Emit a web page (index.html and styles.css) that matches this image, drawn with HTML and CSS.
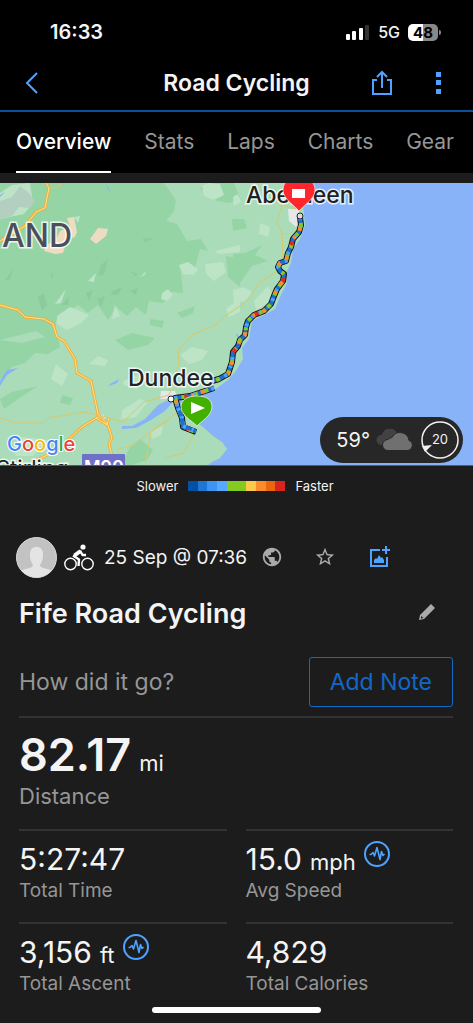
FILE: index.html
```html
<!DOCTYPE html>
<html lang="en">
    <head>
        <meta charset="utf-8">
        <meta name="viewport" content="width=device-width, initial-scale=1">
        <title>Road Cycling</title>
        <link rel="stylesheet" href="styles.css">
    </head>
    <body>
        <div class="top">
            <div class="status-bar">
                <span class="time">16:33</span>
                <div class="status-icons">
                    <svg class="signal" width="24" height="16" viewBox="0 0 24 16" fill="#fff">
                        <rect x="0" y="10" width="4" height="6" rx="1"/>
                        <rect x="6" y="7" width="4" height="9" rx="1"/>
                        <rect x="13" y="4" width="4" height="12" rx="1"/>
                        <rect x="19" y="1" width="4" height="15" rx="1" fill="#333"/>
                    </svg>
                    <span class="network">5G</span>
                    <span class="battery">48</span>
                </div>
            </div>
            <header class="header">
                <button class="icon-button back" aria-label="Back">
                    <svg width="14" height="22" viewBox="0 0 14 22" fill="none" stroke="#4da3ff" stroke-width="2"><path d="M12 1 2 11l10 10"/></svg>
                </button>
                <h1>Road Cycling</h1>
                <div class="header-actions">
                    <button class="icon-button" aria-label="Share">
                        <svg width="22" height="26" viewBox="0 0 22 26" fill="none" stroke="#4da3ff" stroke-width="2"><path d="M6 10H2v14h18V10h-4M11 18V2M6 7l5-5 5 5"/></svg>
                    </button>
                    <button class="icon-button" aria-label="More">
                        <svg width="6" height="24" viewBox="0 0 6 24" fill="#4da3ff"><path d="M0 1h5v5H0zM0 9h5v5H0zM0 18h5v5H0z"/></svg>
                    </button>
                </div>
            </header>
            <nav class="tabs">
                <a href="#overview" class="active">Overview</a>
                <a href="#stats">Stats</a>
                <a href="#laps">Laps</a>
                <a href="#charts">Charts</a>
                <a href="#gear">Gear</a>
            </nav>
        </div>

        <main id="overview">
            <div class="map">
                <svg class="map-image" viewBox="0 0 473 282" preserveAspectRatio="xMidYMid slice">
                    <defs>
                        <path id="ride" d="M300 34 301 42 299 49 293 56 291 64 288 70 286 78 280 80 278 84 280 88 284 91 283 98 277 106 274 113 271 121 264 128 254 132 248 138 246 144 245 152 240 157 238 163 233 169 232 179 228 191 219 196 212 198M214 205 205 208 190 213 175 215 178 225 182 235 183 244 196 249"/>
                    </defs>
                    <!--sea-->
                    <rect width="473" height="282" fill="#89b3f8"/>
                    <!--land-->
                    <path fill="#abdcb9" d="M0 0H307L303 22 305 42 300 56 293 66 291 80 286 90 287 100 281 112 275 126 264 132 252 138 249 156 242 165 243 176 236 188 228 197 214 207 192 212 176 217 180 227 190 236 202 243 213 253 222 259 227 266 220 275 212 279 208 282H0Z"/>
                    <!--firth-->
                    <path fill="#89b3f8" d="M122 243 132 243 145 236 158 222 170 216 190 212 205 222 200 236 188 233 181 222 173 219 165 228 151 237 136 245 122 246Z"/>
                    <!--highlands-->
                    <path fill="#95d4a5" d="M0 0H164L176 17 174 28 166 38 177 41 187 58 201 56 208 68 200 66 195 84 180 82 183 110 171 109 170 115 162 120 149 118 146 132 136 124 127 133 116 124 108 137 98 122 88 130 78 122 56 137 55 160 36 148 0 157Z"/>
                    <path fill="#95d4a5" d="M200 5 213 0 234 0 240 14 230 20 216 18ZM233 71 245 70 262 62 255 72 268 78 252 83 240 100 233 98ZM226 73 240 76 240 104 228 94ZM150 136 164 138 162 145 150 142ZM177 130 195 123 193 130 182 135ZM232 36 244 36 247 45 233 48Z"/>
                    <path fill="#95d4a5" d="M0 157 22 160 57 151 60 164 48 171 35 170 25 180 12 184 0 197ZM115 157 132 150 155 155 148 162 128 167ZM130 264 140 256 153 267 147 277 132 282 112 282 125 274ZM0 216 12 209 38 203 18 216 4 226ZM62 212 73 215 70 222 60 220Z"/>
                    <!--pale patches-->
                    <path fill="#bde4c7" d="M0 10 12 2 30 0 33 20 24 31 0 36ZM202 3 208 0 220 1 224 12 214 17 204 13ZM179 82 188 79 198 86 194 92 183 91ZM205 81 223 79 226 89 214 98 206 91ZM162 110 168 106 173 112 167 118 161 116ZM226 126 240 115 240 129 229 134ZM57 133 70 124 89 132 81 140 67 147 57 141ZM115 122 120 133 112 136ZM56 181 68 191 62 203 51 196ZM89 181 98 173 108 177 105 183ZM123 198 137 192 145 197 137 206 124 202ZM122 227 140 216 148 219 136 234 121 236ZM180 172 192 164 208 168 202 177 189 181ZM12 266 23 254 47 257 33 273 16 273ZM150 248 163 243 161 252 152 256Z"/>
                    <path fill="#bde4c7" d="M215 68 240 62 240 69 218 71ZM260 40 270 44 268 54 259 51ZM254 118 268 103 273 112 268 120 256 127ZM233 107 244 104 252 109 245 118 234 120ZM233 14 238 11 241 19 234 23ZM74 34 80 33 78 40ZM88 98 96 90 94 99ZM55 121 66 106 61 120ZM140 94 146 88 145 92Z"/>
                    <path fill="#8bcb9c" d="M143 55 154 56 144 59ZM5 98 13 85 10 96ZM50 89 53 92 52 96ZM101 82 108 76 104 91 98 93ZM130 88 138 91 135 93ZM38 114 44 110 47 123 42 127ZM86 110 93 107 89 118ZM112 108 122 104 118 112 111 112ZM130 108 138 105 136 112ZM61 122 69 114 68 122ZM97 116 105 113 101 125Z"/>
                    <path fill="#b3cfc0" d="M0 18 12 14 20 3 29 10 35 18 30 25 19 24 12 33 0 36Z"/>
                    <!--bare hills-->
                    <path fill="#eedcc2" d="M67 35 74 34 77 49 75 54 67 57 63 70 55 71 44 68 46 62 56 57 60 48 70 44ZM90 56 98 45 108 46 106 53 96 61Z"/>
                    <!--lochs-->
                    <path fill="#89b3f8" d="M106 0 111 10 108 7ZM0 12 5 9 0 14ZM60 2 65 0 63 2ZM0 198 7 187 18 185 7 192 0 203ZM110 201 119 196 117 200 109 203ZM236 150 240 154 244 158 238 158Z"/>
                    <!--town blocks-->
                    <path fill="#e5e7e8" d="M288 26 297 26 302 33 296 44 289 38ZM161 208 175 208 178 216 160 216ZM98 231 104 232 106 240 99 236Z"/>
                    <!--minor roads-->
                    <g fill="none" stroke="#d7c96b" stroke-width="1">
                        <path d="M0 235 17 240 43 240 48 235 84 229 99 232 123 239 144 219 169 212 179 180 178 168 193 151 216 142 222 135 240 123 247 118 260 99 277 88"/>
                        <path d="M118 266 134 262 150 249 182 226M145 282 151 249 170 236M165 275 184 270 195 249"/>
                        <path d="M48 7 63 1M258 0 265 15 282 22 277 40 282 51 283 77M282 51 292 50M282 22 296 26"/>
                    </g>
                    <!--main roads-->
                    <g class="road-edge">
                        <path id="road-west" d="M46 0 49 5 45 25 36 29 25 43 0 58"/>
                        <path id="road-north" d="M0 122 18 127 25 134 44 136 53 141 57 154 64 158 75 176 77 190 91 198 98 231 108 242 112 255 109 261 112 273"/>
                        <path id="road-south" d="M98 234 82 244 68 257 72 261 54 269 32 279"/>
                        <path id="road-link" d="M96 235 107 242 109 235"/>
                    </g>
                    <g class="road">
                        <use href="#road-west"/>
                        <use href="#road-north"/>
                        <use href="#road-south"/>
                        <use href="#road-link"/>
                    </g>

                    <rect x="82" y="271" width="43" height="20" rx="1" fill="#6f70c7"/>
                    <text x="84" y="291" class="road-sign">M90</text>
                    <text x="2" y="64" class="region">AND</text>
                    <text x="-4" y="293" class="town">Stirling</text>

                    <!--ride, coloured by speed-->
                    <use href="#ride" class="ride-edge"/>
                    <use href="#ride" class="speed"/>
                    <use href="#ride" class="speed speed-light"/>
                    <use href="#ride" class="speed speed-green"/>
                    <use href="#ride" class="speed speed-orange"/>
                    <use href="#ride" class="speed speed-red"/>
                    <path class="speed" d="M178 225 182 235 183 243 196 248"/>
                    <path class="speed speed-light" d="M178 225 182 235 183 243 196 248"/>
                    <circle cx="300" cy="33" r="3" fill="#ddd" stroke="#222"/>
                    <circle cx="171" cy="216" r="3" fill="#fff" stroke="#222"/>

                    <text x="246" y="20" class="city">Aberdeen</text>
                    <text x="128" y="203" class="city">Dundee</text>

                    <!--finish and start pins-->
                    <path fill="#ff262d" stroke="#fff" stroke-opacity=".6" d="M299 28C294 22 283 16 283 7 283-2 291-6 299-6S315-2 315 7C315 16 304 22 299 28Z"/>
                    <rect x="292" y="6" width="13" height="9" fill="#fff"/>
                    <path fill="#43b000" stroke="#e6f5dc" stroke-opacity=".8" d="M197 243C192 238 181 232 181 224 181 216 188 213 197 213S212 216 212 224C212 232 202 238 197 243Z"/>
                    <path fill="#fff" d="M191 219v12l14-6z"/>

                    <text x="7" y="268" class="google"><tspan fill="#4285f4">G</tspan><tspan fill="#ea4335">o</tspan><tspan fill="#fbbc05">o</tspan><tspan fill="#4285f4">g</tspan><tspan fill="#34a853">l</tspan><tspan fill="#ea4335">e</tspan></text>
                </svg>
                <div class="weather">
                    <span>59°</span>
                    <svg width="38" height="22" viewBox="0 0 38 22">
                        <path fill="#424242" d="M5 16a5 5 0 0 1 1-10A8 8 0 0 1 21 4v12z"/>
                        <path fill="#707070" stroke="#272727" d="M12 21.500a5.500 5.500 0 0 1 0-11 6 6 0 0 1 4-2 9 9 0 0 1 17 3 5.200 5.200 0 0 1-1 10z"/>
                    </svg>
                    <svg width="40" height="40" viewBox="0 0 40 40">
                        <circle cx="20" cy="20" r="18" fill="none" stroke="#f2f2f2" stroke-width="1.500"/>
                        <path fill="#f2f2f2" d="M2 26 12 25 5 32Z"/>
                        <text x="20" y="24" class="wind">20</text>
                    </svg>
                </div>
            </div>

            <div class="legend">
                <span>Slower</span>
                <span class="legend-bar"></span>
                <span>Faster</span>
            </div>

            <section class="activity">
                <div class="meta">
                    <svg class="avatar" width="41" height="41" viewBox="0 0 41 41">
                        <clipPath id="round"><circle cx="20.500" cy="20.500" r="20"/></clipPath>
                        <g clip-path="url(#round)">
                            <rect width="41" height="41" fill="#c2c2c2"/>
                            <path fill="#e4e4e4" d="M14 18C13 7 28 7 27 18 27 24 25 26 24 28c0 4 10 3 13 7v6H4v-6c3-4 13-3 13-7-1-2-3-4-3-10Z"/>
                        </g>
                        <circle cx="20.500" cy="20.500" r="20" fill="none" stroke="#dcdcdc"/>
                    </svg>
                    <svg class="bike" width="30" height="27" viewBox="0 0 30 27" fill="none" stroke="#fff">
                        <circle cx="6.500" cy="20" r="5.700" stroke-width="1.400"/>
                        <circle cx="23.500" cy="20" r="5.700" stroke-width="1.400"/>
                        <circle cx="19" cy="3" r="2.600" fill="#fff" stroke="none"/>
                        <path stroke-width="4" stroke-linejoin="round" d="M16.500 7 10.500 11.500"/>
                        <path stroke-width="2.400" stroke-linejoin="round" d="M9 11.500 15 15.500 14.500 22M16 6.500l2.500 4.500h3.500"/>
                    </svg>
                    <span class="date">25 Sep @ 07:36</span>
                    <button class="icon-button privacy" aria-label="Privacy">
                        <svg width="22" height="22" viewBox="0 0 24 24" fill="#aaa"><path d="M12 2C6.480 2 2 6.480 2 12s4.480 10 10 10 10-4.480 10-10S17.520 2 12 2zm-1 17.930c-3.950-.49-7-3.850-7-7.930 0-.62.080-1.210.21-1.790L9 15v1c0 1.100.9 2 2 2v1.930zm6.900-2.540c-.26-.81-1-1.390-1.900-1.390h-1v-3c0-.55-.45-1-1-1H8v-2h2c.55 0 1-.45 1-1V7h2c1.100 0 2-.9 2-2v-.41c2.930 1.190 5 4.060 5 7.410 0 2.080-.8 3.970-2.100 5.390z"/></svg>
                    </button>
                    <button class="icon-button favourite" aria-label="Favourite">
                        <svg width="22" height="22" viewBox="0 0 24 24" fill="#aaa"><path d="m22 9.240-7.190-.62L12 2 9.190 8.630 2 9.240l5.460 4.730L5.820 21 12 17.270 18.180 21l-1.630-7.030L22 9.240zM12 15.400l-3.760 2.270 1-4.280-3.320-2.880 4.380-.38L12 6.100l1.710 4.040 4.380.38-3.320 2.880 1 4.280L12 15.400z"/></svg>
                    </button>
                    <button class="icon-button" aria-label="Add photo">
                        <svg width="22" height="22" viewBox="0 0 22 22"><path fill="none" stroke="#4da3ff" stroke-width="2" d="M11 4H2v16h16v-9M17 0v8M13 4h8"/><path fill="#4da3ff" d="M5 17v-3l2-2 1 1 2-4 2 3 1-1 2 3v3z"/></svg>
                    </button>
                </div>

                <div class="title-row">
                    <h2>Fife Road Cycling</h2>
                    <button class="icon-button" aria-label="Edit title">
                        <svg width="18" height="18" viewBox="0 0 18 18" fill="#aaa"><path d="M13 0 17 4 6 15 1 16 2 11ZM3 12 3 14.500 5.500 14Z" fill-rule="evenodd"/></svg>
                    </button>
                </div>

                <div class="note-row">
                    <span>How did it go?</span>
                    <button class="add-note">Add Note</button>
                </div>

                <dl class="stats">
                    <div class="stat distance">
                        <dt>Distance</dt>
                        <dd>82.17 <small>mi</small></dd>
                    </div>
                    <div class="stat">
                        <dt>Total Time</dt>
                        <dd>5:27:47</dd>
                    </div>
                    <div class="stat">
                        <dt>Avg Speed</dt>
                        <dd>15.0 <small>mph</small>
                            <button class="icon-button chart-button" aria-label="Speed chart">
                                <svg width="26" height="26" viewBox="0 0 26 26" fill="none" stroke="#4da3ff"><circle cx="13" cy="13" r="12" stroke-width="2"/><path id="pulse" stroke-width="1.600" stroke-linejoin="round" d="M5.500 13.500h1.500l2-2 1.500 3.500L13 6.500l3 12 1.500-8 1.500 4 1.500-1.500"/></svg>
                            </button>
                        </dd>
                    </div>
                    <div class="stat">
                        <dt>Total Ascent</dt>
                        <dd>3,156 <small>ft</small>
                            <button class="icon-button chart-button" aria-label="Elevation chart">
                                <svg width="26" height="26" viewBox="0 0 26 26" fill="none" stroke="#4da3ff"><circle cx="13" cy="13" r="12" stroke-width="2"/><use href="#pulse"/></svg>
                            </button>
                        </dd>
                    </div>
                    <div class="stat">
                        <dt>Total Calories</dt>
                        <dd>4,829</dd>
                    </div>
                </dl>
            </section>
        </main>
        <div class="home-indicator"></div>
    </body>
</html>
```
FILE: styles.css
```css
*
{
    box-sizing: border-box;
}

body
{
    margin: 0;
    min-height: 100vh;
    background-color: #1c1c1c;
    color: #f4f4f4;
    font-family: Inter, "Liberation Sans", sans-serif;
}

h1, h2, dl, dd
{
    margin: 0;
}

svg
{
    display: block;
    flex-shrink: 0;
}

.icon-button
{
    padding: 0;
    border: none;
    background: none;
    cursor: pointer;
}

.top
{
    background-color: #000;
}

.status-bar
{
    display: flex;
    justify-content: space-between;
    align-items: center;
    height: 56px;
    padding: 8px 35px 0 50px;
}

.time
{
    font-size: 20px;
    font-weight: 600;
}

.status-icons
{
    display: flex;
    align-items: center;
    gap: 8px;
}

.network
{
    font-size: 16px;
    font-weight: 500;
}

.battery
{
    position: relative;
    width: 30px;
    border-radius: 5px;
    background: linear-gradient(90deg, #fff 50%, #888 50%);
    color: #000;
    font-size: 15px;
    font-weight: 700;
    line-height: 17px;
    text-align: center;
}

.battery:after
{
    content: "";
    position: absolute;
    right: -3px;
    top: 6px;
    width: 2px;
    height: 5px;
    border-radius: 0 2px 2px 0;
    background: #888;
}

.header
{
    display: grid;
    grid-template-columns: 1fr auto 1fr;
    align-items: center;
    height: 56px;
    padding: 0 31px;
    border-bottom: 2px solid #0d5299;
}

.back
{
    justify-self: start;
    margin-left: -6px;
}

.header h1
{
    font-size: 23px;
    font-weight: 600;
}

.header-actions
{
    display: flex;
    justify-content: flex-end;
    gap: 43px;
}

.tabs
{
    display: flex;
    justify-content: space-between;
    padding: 0 19px 0 16px;
}

.tabs a
{
    color: #969696;
    font-size: 21px;
    line-height: 59px;
    text-decoration: none;
    border-bottom: 2px solid transparent;
}

.tabs .active
{
    color: #fff;
    font-weight: 500;
    border-color: #fff;
}

.map
{
    position: relative;
    margin-top: 10px;
    border-bottom: 1px solid #4b5d7c;
}

.map-image
{
    width: 100%;
    height: auto;
}

.road-edge
{
    fill: none;
    stroke: #eeb13c;
    stroke-width: 3;
}

.road
{
    fill: none;
    stroke: #ffe28f;
    stroke-width: 1;
}

.region, .city, .town
{
    fill: #222;
    stroke: #fff;
    stroke-opacity: 0.8;
    stroke-width: 3px;
    paint-order: stroke;
}

.region
{
    fill: #4b4f5c;
    font-size: 32px;
    font-weight: 500;
}

.city
{
    font-size: 23px;
    font-weight: 500;
}

.town
{
    font-size: 22px;
}

.road-sign
{
    fill: #fff;
    font-size: 18px;
    font-weight: 600;
}

.google
{
    font-size: 20px;
    font-weight: 500;
    stroke: #fff;
    stroke-width: 2px;
    paint-order: stroke;
}

.ride-edge
{
    fill: none;
    stroke: #111;
    stroke-width: 6;
    stroke-linejoin: round;
}

.speed
{
    fill: none;
    stroke: #1f6fd0;
    stroke-width: 4;
    stroke-linejoin: round;
}

.speed-light
{
    stroke: #4da3ff;
    stroke-dasharray: 3 6 2 8;
}

.speed-green
{
    stroke: #84cb1f;
    stroke-dasharray: 0 6 4 7 3 4;
}

.speed-orange
{
    stroke: #fb8b2b;
    stroke-dasharray: 0 10 4 7 3 9;
}

.speed-red
{
    stroke: #e02a20;
    stroke-dasharray: 0 27 4 14;
}

.weather
{
    position: absolute;
    right: 10px;
    bottom: 2px;
    display: flex;
    align-items: center;
    gap: 6px;
    height: 46px;
    padding: 0 3px 0 16px;
    border-radius: 23px;
    background-color: #272727;
    font-size: 20px;
}

.wind
{
    fill: #f2f2f2;
    font-size: 13px;
    text-anchor: middle;
}

.legend
{
    display: flex;
    justify-content: center;
    align-items: center;
    gap: 10px;
    height: 40px;
    padding-right: 3px;
    font-size: 13px;
}

.legend-bar
{
    width: 97px;
    height: 10px;
    background: linear-gradient(90deg, #0450a4 10%, #1f77d3 10% 20%, #3c95f2 20% 30%, #56a9ff 30% 40%, #84cb1f 40% 60%, #fdc84b 60% 70%, #fb8b2b 70% 80%, #ec660f 80% 90%, #d8231f 90%);
}

.activity
{
    padding: 30px 20px 24px 19px;
}

.meta
{
    display: flex;
    align-items: center;
    height: 42px;
    margin-left: -3px;
}

.bike
{
    margin: 0 10px 0 7px;
}

.date
{
    font-size: 19px;
}

.privacy
{
    margin-left: 14px;
}

.favourite
{
    margin: 0 33px 0 31px;
}

.title-row
{
    display: flex;
    justify-content: space-between;
    align-items: center;
    height: 70px;
    padding-right: 17px;
}

.title-row h2
{
    font-size: 27px;
    font-weight: 600;
}

.note-row
{
    display: flex;
    justify-content: space-between;
    align-items: center;
    margin: 9px 0;
    color: #969696;
    font-size: 23px;
}

.add-note
{
    height: 50px;
    padding: 0 20px;
    border: 1px solid #1268c8;
    border-radius: 3px;
    background: none;
    color: #1268c8;
    font: inherit;
}

.stats
{
    display: grid;
    grid-template-columns: 1fr 1fr;
    column-gap: 19px;
}

.stat
{
    display: flex;
    flex-direction: column-reverse;
    justify-content: flex-end;
    height: 93px;
    padding-top: 10px;
    border-top: 2px solid #333;
}

.stat dt
{
    color: #969696;
    font-size: 19px;
    line-height: 28px;
}

.stat dd
{
    display: flex;
    align-items: baseline;
    gap: 8px;
    font-size: 30px;
    line-height: 36px;
}

.stat small
{
    font-size: 22px;
    line-height: 24px;
}

.chart-button
{
    align-self: flex-start;
}

.distance
{
    grid-column: 1 / -1;
    height: 113px;
}

.distance dt
{
    font-size: 22px;
    line-height: 28px;
}

.distance dd
{
    font-size: 45px;
    font-weight: 600;
    line-height: 54px;
}

.distance small
{
    font-weight: 400;
}

.home-indicator
{
    position: fixed;
    bottom: 10px;
    left: 50%;
    width: 169px;
    height: 6px;
    margin-left: -85px;
    border-radius: 3px;
    background-color: #fff;
}
```
